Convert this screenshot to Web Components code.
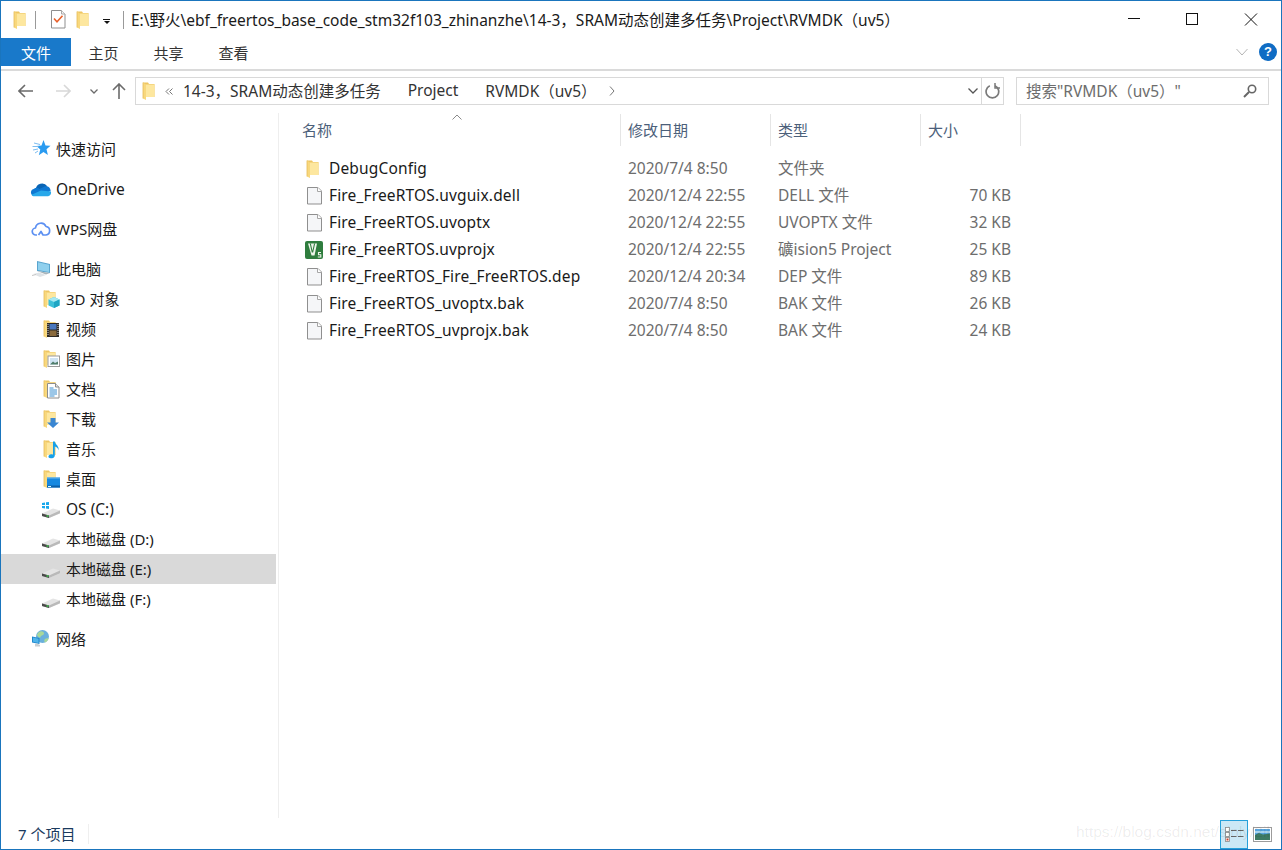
<!DOCTYPE html>
<html lang="zh">
<head>
<meta charset="utf-8">
<title>RVMDK（uv5）</title>
<style>
  html, body { margin: 0; padding: 0; background: #fff; }
  body { font: 15px "Noto Sans", "Noto Sans CJK SC", sans-serif; color: #1a1a1a; }
</style>
</head>
<body>
<x-window>
  <x-titlebar path="E:\野火\ebf_freertos_base_code_stm32f103_zhinanzhe\14-3，SRAM动态创建多任务\Project\RVMDK（uv5）"></x-titlebar>
  <x-ribbon></x-ribbon>
  <x-navbar></x-navbar>
  <x-content>
    <x-sidebar slot="side">
      <x-nav-item icon="star" gap>快速访问</x-nav-item>
      <x-nav-item icon="onedrive" gap latin>OneDrive</x-nav-item>
      <x-nav-item icon="wps" gap>WPS网盘</x-nav-item>
      <x-nav-item icon="pc" gap>此电脑</x-nav-item>
      <x-nav-item icon="obj3d" sub>3D 对象</x-nav-item>
      <x-nav-item icon="video" sub>视频</x-nav-item>
      <x-nav-item icon="pictures" sub>图片</x-nav-item>
      <x-nav-item icon="docs" sub>文档</x-nav-item>
      <x-nav-item icon="downloads" sub>下载</x-nav-item>
      <x-nav-item icon="music" sub>音乐</x-nav-item>
      <x-nav-item icon="desktop" sub>桌面</x-nav-item>
      <x-nav-item icon="osdrive" sub latin>OS (C:)</x-nav-item>
      <x-nav-item icon="drive" sub>本地磁盘 (D:)</x-nav-item>
      <x-nav-item icon="drive" sub selected>本地磁盘 (E:)</x-nav-item>
      <x-nav-item icon="drive" sub>本地磁盘 (F:)</x-nav-item>
      <x-nav-item icon="network" gap>网络</x-nav-item>
    </x-sidebar>
    <x-file-list slot="main">
      <x-file-row icon="folder" name="DebugConfig" date="2020/7/4 8:50" type="文件夹" size=""></x-file-row>
      <x-file-row icon="file" name="Fire_FreeRTOS.uvguix.dell" date="2020/12/4 22:55" type="DELL 文件" size="70 KB"></x-file-row>
      <x-file-row icon="file" name="Fire_FreeRTOS.uvoptx" date="2020/12/4 22:55" type="UVOPTX 文件" size="32 KB"></x-file-row>
      <x-file-row icon="uvision" name="Fire_FreeRTOS.uvprojx" date="2020/12/4 22:55" type="礦ision5 Project" size="25 KB"></x-file-row>
      <x-file-row icon="file" name="Fire_FreeRTOS_Fire_FreeRTOS.dep" date="2020/12/4 20:34" type="DEP 文件" size="89 KB"></x-file-row>
      <x-file-row icon="file" name="Fire_FreeRTOS_uvoptx.bak" date="2020/7/4 8:50" type="BAK 文件" size="26 KB"></x-file-row>
      <x-file-row icon="file" name="Fire_FreeRTOS_uvprojx.bak" date="2020/7/4 8:50" type="BAK 文件" size="24 KB"></x-file-row>
    </x-file-list>
  </x-content>
  <x-statusbar count="7 个项目"></x-statusbar>
</x-window>

<script>
// folder drawn in an 18x18 box, x 2..13
const folderSvg = `
  <path d="M2 .5h5l1 1.500h5.500v13H2z" fill="#eec562"/>
  <path d="M5 2.500h8.500v12.500H5z" fill="#fde79f"/>
  <path d="M2 .5v16l3 1.500V2.500z" fill="#f8d87d"/>
  <path d="M2 .5v16" stroke="#e6bb55" stroke-width=".8"/>`;

const driveSvg = `
  <path d="M0 13.500 11 8.500l7 2v3L7 18l-7-2z" fill="#e4e4e4"/>
  <path d="M0 13.500 7 15.500 18 10.500v2.800L7 18l-7-2z" fill="#b9b9b9"/>
  <path d="M0 13.600l7 2v2.400L0 16z" fill="#4a4a4a"/>
  <rect x="4.500" y="15.200" width="2" height="1.600" fill="#3fbf4f"/>`;

const ICONS = {
  folder: folderSvg,
  star: `<path d="M11.500 0l2 5.400 5 .3-4 3.500 1.400 5.800-4.400-3-4.700 3.200 1.500-5.700L4.500 5.900l5-.4z" fill="#2a9bf0"/>
    <path d="M2 3l6 1.500M.5 6.500h6M1 10l5-1M3 13l3-2" stroke="#7dbdf0" stroke-width="1"/>`,
  onedrive: `<svg viewBox="0 0 20 16" x="-1.500" y="1" width="21" height="17">
      <path d="M5 8a6 6 0 0 1 11-3l-8 6z" fill="#0a64b4"/>
      <path d="M3 7.500C5 6 7 6 8.500 7.500L14 5c3-.5 5 1.500 5.200 4.500L8 14H3.500C-.5 14-.5 8 3 7.500z" fill="#0f78d2"/>
      <path d="M1 13l9-4 9.500 1c.5 2.500-1 4.500-3.500 4.500H3.500C2.500 14.500 1.500 14 1 13z" fill="#28a8ea"/>
    </svg>`,
  wps: `<path d="M5 15H4a3.500 3.500 0 0 1-.5-7A5.500 5.500 0 0 1 14 6.500a4.300 4.300 0 0 1 0 8.500h-3.500M6.500 15l2.500-3.500 2 3.500" fill="none" stroke="#5c90f2" stroke-width="1.700" stroke-linejoin="round"/>`,
  pc: `<path d="M5 1l13 3v9L5 11z" fill="#59a5cf"/><path d="M6 2.200l11 2.500v7.200L6 10z" fill="#8fd0ee"/>
    <path d="M5 11l13 2-4 1.500z" fill="#a9b4ba"/>
    <path d="M1 14l6-1.500 7 2.500-6 2z" fill="#dfe3e6"/><path d="M0 15.500l4-1" stroke="#c5c5c5"/>`,
  obj3d: folderSvg + `<path d="M12 7l5.500 2.500v6L12 18l-5.500-2.500v-6z" fill="#3cc0d8"/><path d="M6.500 9.500L12 7l5.500 2.500L12 12z" fill="#a5e8f2"/><path d="M12 12v6l5.500-2.500v-6z" fill="#1ea5c4"/>`,
  video: folderSvg + `<rect x="5" y="3" width="12" height="14" fill="#2e2a25"/><rect x="7.500" y="4" width="7" height="5.500" fill="#4a78bd"/><rect x="7.500" y="10.500" width="7" height="5.500" fill="#8a6a3c"/><path d="M6 4v12M16 4v12" stroke="#cfcfcf" stroke-width="1" stroke-dasharray="1 1"/>`,
  pictures: folderSvg + `<rect x="6" y="6" width="11.500" height="10.500" fill="#fff" stroke="#9a9a9a"/><rect x="8" y="8" width="8" height="6.500" fill="#cfe3f3"/><path d="M8 14.500l3-3 2 1.500 3-1.500v3z" fill="#4f7d6a"/>`,
  docs: folderSvg + `<path d="M5.500 3.500h8l3.500 3.500v11H5.500z" fill="#fff" stroke="#8c8c8c"/><path d="M13.500 3.500V7H17" fill="#e3e3e3" stroke="#8c8c8c"/><path d="M7.500 8h4M7.500 10h7.500M7.500 12h7.500M7.500 14h7.500M7.500 16h5" stroke="#3a8fd0"/>`,
  downloads: folderSvg + `<path d="M8.500 8h5v4.500H17l-6 5.500-6-5.500h3.500z" fill="#3a86d2"/>`,
  music: folderSvg + `<path d="M11 1.500h1.800c.3 3 4.700 4.300 3.700 9-.2-2.500-2-3.500-3.700-4v9c0 2-2 2.800-4 2.800s-3-1.500-2-2.800 3-1.500 4.200-.7z" fill="#17a0e8"/>`,
  desktop: folderSvg + `<rect x="5" y="7.500" width="13" height="10" fill="#1688e0"/><rect x="5" y="15.500" width="13" height="2" fill="#0b5fa8"/><rect x="6" y="16" width="3" height="1" fill="#dff"/><rect x="5" y="7.500" width="13" height="1" fill="#68b8f0"/>`,
  osdrive: driveSvg + `<path d="M0 3l3-.5V5H0zM4 2.300L7 2v3H4zM0 6h3v2.500L0 8zM4 6h3v3l-3-.4z" fill="#19a8ec"/>`,
  drive: driveSvg,
  network: `<circle cx="10.500" cy="6.500" r="6.500" fill="#6ab0dc"/><path d="M7 2c2-1.500 5-.5 5 1.500S9 5 8.500 7 5 6 5 5s1-2 2-3zM13 9c1-1 3-1 3.500-.5-.5 2-2 3.500-3.500 4-1-1-1-2.500 0-3.500z" fill="#a8d89a"/>
    <path d="M0 6.500l7.500 1.500v6L0 12.500z" fill="#1f87cc"/><path d="M1 7.500l5.500 1.200v4.300L1 11.800z" fill="#4fb4ea"/>
    <path d="M3 14l2-.5 3 1.500v1.500H3z" fill="#c8ced2"/>`,
  file: `<path d="M.5.500h10.500l3.500 3.500v13H.5z" fill="#f5f6f8" stroke="#8f8f8f"/><path d="M10.500.500V4.500h4" fill="#fff" stroke="#a6a6a6"/>`,
  uvision: `<rect width="18" height="18" rx="2" fill="#2f7d3e"/>
    <path d="M3 2.500h9l-2.500 12h-3z" fill="#eef5ea"/>
    <path d="M5.300 2.500l2 9M9.600 2.500l-2 9" stroke="#2f7d3e" stroke-width="1.100"/>
    <path d="M16 11.500h-2.500v2.200h2.300v2.300h-3" fill="none" stroke="#eef5ea" stroke-width="1.100"/>`,
  check: `<path d="M.5.500h10l3.500 3.500v14H.5z" fill="#fff" stroke="#8f8f8f"/><path d="M10.500.500V4H14" fill="#f4f4f4" stroke="#a8a8a8"/><path d="M3 8.500l3 3.200 5.500-6" fill="none" stroke="#e8612c" stroke-width="1.600"/>`,
  details: `<rect x=".5" y=".5" width="4" height="4" fill="#fff" stroke="#888" stroke-width=".8"/><rect x=".5" y="5.500" width="4" height="4" fill="#fff" stroke="#888" stroke-width=".8"/><rect x=".5" y="10.500" width="4" height="4" fill="#fff" stroke="#888" stroke-width=".8"/><rect x="1.500" y="11.500" width="2" height="2" fill="#d0442c"/>
    <path d="M6 3.500h13M6 9.500h13" stroke="#666" stroke-dasharray="5.500 1.500"/>`,
  preview: `<rect x=".5" y=".5" width="18" height="14" fill="#fff" stroke="#9c9c9c"/><rect x="2" y="2" width="15" height="11" fill="#58a6de"/><path d="M2 8l4-2 4 1.500 7-1V13H2z" fill="#3d7a64"/><path d="M2 5h15" stroke="#a8d4ee" stroke-width="2"/>`
};

// viewBox sizes for icons that do not use the 18x18 box
const SIZES = { file: [15, 18], check: [15, 19], details: [19, 15], preview: [19, 15] };

class XIcon extends HTMLElement {
  connectedCallback() {
    const name = this.getAttribute('name');
    const [w, h] = SIZES[name] || [18, 18];
    this.attachShadow({ mode: 'open' }).innerHTML = `
      <style>
        :host { display: inline-flex; flex: none; width: ${w}px; height: ${h}px; }
        svg { display: block; overflow: visible; }
      </style>
      <svg width="${w}" height="${h}" viewBox="0 0 ${w} ${h}">${ICONS[name]}</svg>`;
  }
}

class XWindow extends HTMLElement {
  constructor() {
    super();
    this.attachShadow({ mode: 'open' }).innerHTML = `
      <style>
        :host {
          display: flex; flex-direction: column; box-sizing: border-box;
          width: 1282px; height: 850px; border: 1px solid #1a75bd;
          background: #fff; overflow: hidden; position: relative;
        }
      </style>
      <slot></slot>`;
  }
}

class XTitlebar extends HTMLElement {
  connectedCallback() {
    this.attachShadow({ mode: 'open' }).innerHTML = `
      <style>
        :host { display: flex; align-items: center; height: 37px; flex: none; padding-left: 11px; }
        .sep { width: 1px; height: 18px; background: #9a9a9a; flex: none; }
        .drop { width: 7px; flex: none; display: flex; flex-direction: column; align-items: center; gap: 1px; margin-top: 3px; }
        .drop i { display: block; width: 7px; height: 1px; background: #111; }
        .drop b { width: 0; height: 0; border: 3.5px solid transparent; border-top-color: #111; border-bottom: 0; }
        .path { margin-left: 7px; white-space: nowrap; font-size: 15.5px; color: #1a1a1a; flex: 1; }
      </style>
      <x-icon name="folder"></x-icon>
      <span class="sep" style="margin-left:5px"></span>
      <x-icon name="check" style="margin-left:15px"></x-icon>
      <x-icon name="folder" style="margin-left:9px"></x-icon>
      <span class="drop" style="margin-left:10px"><i></i><b></b></span>
      <span class="sep" style="margin-left:13px"></span>
      <span class="path">${this.getAttribute('path')}</span>
      <svg width="140" height="37" viewBox="0 0 140 37" style="flex:none;margin-right:13px">
        <path d="M0 17.500h12" stroke="#111" stroke-width="1"/>
        <rect x="58.500" y="12.500" width="11" height="11" fill="none" stroke="#111"/>
        <path d="M117 12.500l12 12M129 12.500l-12 12" stroke="#111" stroke-width="1"/>
      </svg>`;
  }
}

class XRibbon extends HTMLElement {
  constructor() {
    super();
    this.attachShadow({ mode: 'open' }).innerHTML = `
      <style>
        :host { display: flex; height: 28px; flex: none; padding-bottom: 3px; border-bottom: 2px solid #dadada; }
        .tab { width: 65px; display: flex; align-items: center; justify-content: center; font-size: 15px; color: #333; }
        .file { width: 70px; background: #1979ca; color: #fff; }
        .space { flex: 1; }
        .right { display: flex; align-items: center; gap: 11px; padding-right: 4px; }
        .help { width: 18px; height: 18px; border-radius: 50%; background: #0f6cc4; color: #fff; font: bold 13px/18px "Liberation Sans", sans-serif; text-align: center; }
      </style>
      <div class="tab file">文件</div>
      <div class="tab">主页</div>
      <div class="tab">共享</div>
      <div class="tab">查看</div>
      <div class="space"></div>
      <div class="right">
        <svg width="12" height="8" viewBox="0 0 12 8"><path d="M.5 1l5.500 6 5.500-6" fill="none" stroke="#b5b5b5"/></svg>
        <div class="help">?</div>
      </div>`;
  }
}

class XNavbar extends HTMLElement {
  constructor() {
    super();
    this.attachShadow({ mode: 'open' }).innerHTML = `
      <style>
        :host { display: flex; align-items: center; height: 42px; flex: none; padding-bottom: 2px; box-sizing: border-box; }
        svg { display: block; flex: none; }
        .addr {
          display: flex; align-items: center; box-sizing: border-box; height: 28px; width: 869px;
          margin-left: 9px; border: 1px solid #d9d9d9; font-size: 15.5px; color: #333; padding-left: 5px;
        }
        .crumbs { display: flex; align-items: center; flex: 1; white-space: nowrap; }
        .crumbs span { padding-bottom: 2px; }
        .box { display: flex; align-items: center; justify-content: center; height: 26px; flex: none; }
        .search {
          display: flex; align-items: center; justify-content: space-between; box-sizing: border-box;
          width: 253px; height: 28px; margin-left: 12px; border: 1px solid #d9d9d9;
          padding: 0 11px 0 9px; font-size: 15.5px; color: #6d6d6d; white-space: nowrap;
        }
        .search span { padding-bottom: 2px; }
      </style>
      <svg width="15" height="14" viewBox="0 0 15 14" style="margin-left:17px"><path d="M1 7h14M7 1L1 7l6 6" fill="none" stroke="#6b6b6b" stroke-width="1.600"/></svg>
      <svg width="15" height="14" viewBox="0 0 15 14" style="margin-left:23px"><path d="M0 7h14M8 1l6 6-6 6" fill="none" stroke="#d8d8d8" stroke-width="1.600"/></svg>
      <svg width="8" height="5" viewBox="0 0 8 5" style="margin-left:19px"><path d="M.5.500L4 4 7.500.500" fill="none" stroke="#6b6b6b" stroke-width="1.300"/></svg>
      <svg width="14" height="16" viewBox="0 0 14 16" style="margin-left:14px"><path d="M7 16V1M1 7l6-6 6 6" fill="none" stroke="#6b6b6b" stroke-width="1.600"/></svg>
      <div class="addr">
        <div class="crumbs">
          <x-icon name="folder"></x-icon>
          <svg width="8" height="7" viewBox="0 0 8 7" style="margin-left:6px"><path d="M4 .5L1 3.500l3 3M7.500.5l-3 3 3 3" fill="none" stroke="#777"/></svg>
          <span style="margin-left:10px">14-3，SRAM动态创建多任务</span>
          <span style="margin-left:27px">Project</span>
          <span style="margin-left:27px">RVMDK（uv5）</span>
          <svg width="6" height="10" viewBox="0 0 6 10" style="margin-left:12px"><path d="M1 .5l4 4.500-4 4.500" fill="none" stroke="#777"/></svg>
        </div>
        <div class="box" style="width:16px"><svg width="10" height="6" viewBox="0 0 10 6"><path d="M.5.500L5 5 9.500.500" fill="none" stroke="#555" stroke-width="1.300"/></svg></div>
        <div class="box" style="width:21px;border-left:1px solid #d9d9d9"><svg width="15" height="16" viewBox="0 0 15 16"><path d="M4.800 2.800A6.300 6.300 0 1 0 10 2.800" fill="none" stroke="#7a7a7a" stroke-width="1.700"/><path d="M10 0v5h5" fill="none" stroke="#7a7a7a" stroke-width="1.500"/></svg></div>
      </div>
      <div class="search">
        <span>搜索"RVMDK（uv5）"</span>
        <svg width="14" height="14" viewBox="0 0 14 14"><circle cx="9" cy="5" r="3.700" fill="none" stroke="#666" stroke-width="1.600"/><path d="M6 8l-5 5" stroke="#666" stroke-width="2"/></svg>
      </div>`;
  }
}

class XContent extends HTMLElement {
  constructor() {
    super();
    this.attachShadow({ mode: 'open' }).innerHTML = `
      <style>
        :host { display: flex; flex: 1; min-height: 0; }
      </style>
      <slot name="side"></slot>
      <slot name="main"></slot>`;
  }
}

class XSidebar extends HTMLElement {
  constructor() {
    super();
    this.attachShadow({ mode: 'open' }).innerHTML = `
      <style>
        :host {
          display: block; box-sizing: border-box; width: 278px; flex: none;
          padding: 11px 2px 0 0; border-right: 1px solid #eeeeee;
        }
      </style>
      <slot></slot>`;
  }
}

class XNavItem extends HTMLElement {
  connectedCallback() {
    const sub = this.hasAttribute('sub');
    const latin = this.hasAttribute('latin');
    this.attachShadow({ mode: 'open' }).innerHTML = `
      <style>
        :host {
          display: flex; align-items: center; gap: 6px; height: 30px;
          padding-left: ${sub ? 41 : 31}px; font-size: ${latin ? 15.5 : 15}px; color: #1a1a1a; white-space: nowrap;
          margin-top: ${this.hasAttribute('gap') ? 10 : 0}px;
        }
        :host([selected]) { background: #d9d9d9; }
        span { padding-bottom: ${latin ? 0 : 2}px; }
      </style>
      <x-icon name="${this.getAttribute('icon')}"></x-icon>
      <span><slot></slot></span>`;
  }
}

class XFileList extends HTMLElement {
  constructor() {
    super();
    this.attachShadow({ mode: 'open' }).innerHTML = `
      <style>
        :host { display: block; flex: 1; padding: 1px 0 0 15px; position: relative; min-width: 0; }
        .head { display: grid; grid-template-columns: 327px 150px 150px 100px; height: 32px; margin-bottom: 9px; color: #4c607a; font-size: 15px; }
        .head div { display: flex; align-items: center; padding: 0 0 2px 7px; border-right: 1px solid #e5e5e5; box-sizing: border-box; }
        .head div:first-child { padding-left: 8px; }
        .caret { position: absolute; left: 173px; top: 1px; }
      </style>
      <div class="head"><div>名称</div><div>修改日期</div><div>类型</div><div>大小</div></div>
      <svg class="caret" width="10" height="6" viewBox="0 0 10 6"><path d="M.5 5.500L5 1l4.500 4.500" fill="none" stroke="#8a8a8a"/></svg>
      <slot></slot>`;
  }
}

class XFileRow extends HTMLElement {
  connectedCallback() {
    const icon = this.getAttribute('icon');
    const pad = icon === 'file' ? 13 : 11;
    const gap = icon === 'file' ? 7 : 6;
    this.attachShadow({ mode: 'open' }).innerHTML = `
      <style>
        :host { display: grid; grid-template-columns: 327px 150px 150px 100px; height: 27px; align-items: center; font-size: 15.5px; white-space: nowrap; }
        .name { display: flex; align-items: center; gap: ${gap}px; padding-left: ${pad}px; color: #1a1a1a; }
        .name span { padding-bottom: 2px; letter-spacing: .15px; }
        .meta { padding: 0 0 2px 7px; color: #6d6d6d; }
        .size { padding: 0 10px 2px 0; text-align: right; color: #6d6d6d; }
      </style>
      <div class="name"><x-icon name="${icon}"></x-icon><span>${this.getAttribute('name')}</span></div>
      <div class="meta">${this.getAttribute('date')}</div>
      <div class="meta">${this.getAttribute('type')}</div>
      <div class="size">${this.getAttribute('size')}</div>`;
  }
}

class XStatusbar extends HTMLElement {
  connectedCallback() {
    this.attachShadow({ mode: 'open' }).innerHTML = `
      <style>
        :host { display: flex; align-items: center; height: 31px; flex: none; position: relative; font-size: 15px; color: #1a3a5e; }
        .count { margin-left: 17px; width: 70px; }
        .sep { width: 1px; height: 20px; background: #efefef; }
        .space { flex: 1; }
        .btn { display: flex; align-items: center; justify-content: center; box-sizing: border-box; width: 28px; height: 29px; margin-top: 2px; }
        .on { background: #cbe8f6; border: 1px solid #26a0da; }
        .mark { position: absolute; left: 1075px; top: 5px; font: 15.5px "Liberation Sans", sans-serif; color: rgba(0,0,0,.08); pointer-events: none; white-space: nowrap; }
      </style>
      <span class="count">${this.getAttribute('count')}</span>
      <span class="sep"></span>
      <span class="space"></span>
      <div class="btn on"><x-icon name="details"></x-icon></div>
      <div class="btn" style="margin-right:5px"><x-icon name="preview"></x-icon></div>
      <span class="mark">https://blog.csdn.net/sinly/2il</span>`;
  }
}

customElements.define('x-icon', XIcon);
customElements.define('x-window', XWindow);
customElements.define('x-titlebar', XTitlebar);
customElements.define('x-ribbon', XRibbon);
customElements.define('x-navbar', XNavbar);
customElements.define('x-content', XContent);
customElements.define('x-sidebar', XSidebar);
customElements.define('x-nav-item', XNavItem);
customElements.define('x-file-list', XFileList);
customElements.define('x-file-row', XFileRow);
customElements.define('x-statusbar', XStatusbar);
</script>
</body>
</html>
